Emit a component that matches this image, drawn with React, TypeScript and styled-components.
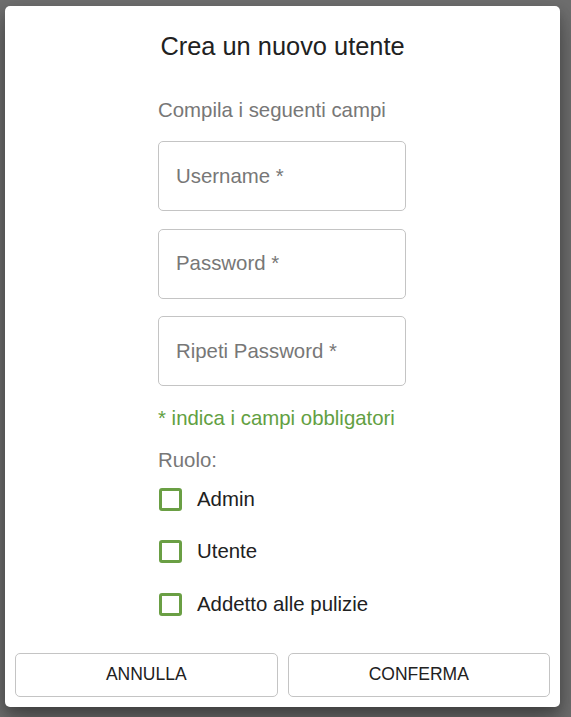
import React from "react";
import styled, { createGlobalStyle } from "styled-components";

const Global = createGlobalStyle`
  html, body { margin: 0; padding: 0; }
  body {
    background: #6e6e6e;
    font-family: "Liberation Sans", Arial, sans-serif;
    width: 571px;
    height: 717px;
    overflow: hidden;
  }
`;

const Backdrop = styled.div`
  width: 571px;
  height: 717px;
  padding: 6px 0 0 5px;
  box-sizing: border-box;
`;

const Dialog = styled.div`
  width: 555px;
  background: #fff;
  border-radius: 5px;
  box-shadow: 0 14px 28px rgba(0, 0, 0, 0.3), 0 6px 12px rgba(0, 0, 0, 0.2);
  display: flex;
  flex-direction: column;
`;

const Title = styled.h2`
  margin: 0;
  padding: 20px 30px 0;
  font-size: 25.4px;
  font-weight: 400;
  line-height: 40px;
  color: #212121;
  text-align: center;
`;

const Content = styled.div`
  width: 248px;
  margin-left: 153px;
  display: flex;
  flex-direction: column;
  padding-top: 29px;
`;

const Subtitle = styled.p`
  margin: 0 0 16px;
  font-size: 20.4px;
  line-height: 30px;
  color: #777;
`;

const Field = styled.div`
  height: 70px;
  box-sizing: border-box;
  border: 1px solid #c4c4c4;
  border-radius: 5px;
  display: flex;
  align-items: center;
  padding-left: 17px;
  font-size: 20.4px;
  color: #777;
  & + & { margin-top: 17.5px; }
`;

const Required = styled.p`
  margin: 17px 0 0;
  font-size: 20.4px;
  line-height: 30px;
  color: #62a042;
`;

const RoleLabel = styled.p`
  margin: 14px 0 0;
  font-size: 20.4px;
  line-height: 26px;
  color: #777;
`;

const CheckRow = styled.label`
  height: 52.5px;
  display: flex;
  align-items: center;
  gap: 15px;
  font-size: 20.4px;
  color: #212121;
`;

const Box = styled.span`
  width: 23px;
  height: 23px;
  box-sizing: border-box;
  margin-left: 1px;
  border: 3px solid #6a9f44;
  border-radius: 3px;
  flex-shrink: 0;
`;

const Actions = styled.div`
  display: flex;
  gap: 10px;
  padding: 22px 10px 10px;
`;

const Button = styled.button`
  flex: 1;
  height: 44px;
  background: #fff;
  border: 1px solid #c4c4c4;
  border-radius: 5px;
  font-family: "Liberation Sans", Arial, sans-serif;
  font-size: 17.5px;
  color: #212121;
  text-transform: uppercase;
  cursor: pointer;
`;

const fields = ["Username *", "Password *", "Ripeti Password *"];
const roles = ["Admin", "Utente", "Addetto alle pulizie"];

export default function App() {
  return (
    <>
      <Global />
      <Backdrop>
        <Dialog>
          <Title>Crea un nuovo utente</Title>
          <Content>
            <Subtitle>Compila i seguenti campi</Subtitle>
            {fields.map((f) => (
              <Field key={f}>{f}</Field>
            ))}
            <Required>* indica i campi obbligatori</Required>
            <RoleLabel>Ruolo:</RoleLabel>
            {roles.map((r) => (
              <CheckRow key={r}>
                <Box />
                {r}
              </CheckRow>
            ))}
          </Content>
          <Actions>
            <Button>Annulla</Button>
            <Button>Conferma</Button>
          </Actions>
        </Dialog>
      </Backdrop>
    </>
  );
}
